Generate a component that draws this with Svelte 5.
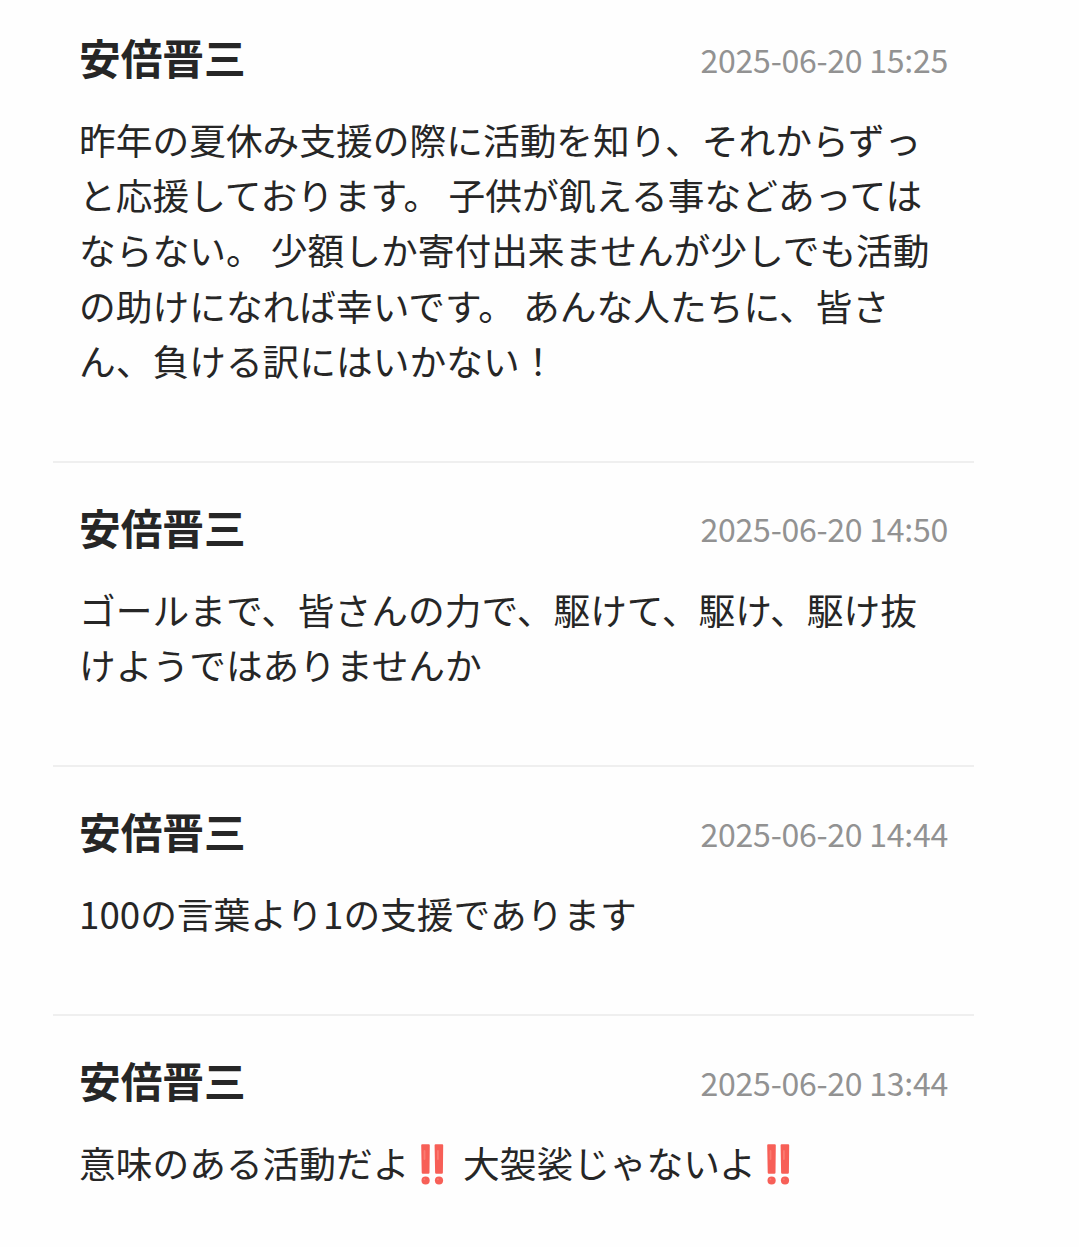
<script>
  const comments = [
    { name: '安倍晋三', time: '2025-06-20 15:25', lines: ['昨年の夏休み支援の際に活動を知り、それからずっ', 'と応援しております。 子供が飢える事などあっては', 'ならない。 少額しか寄付出来ませんが少しでも活動', 'の助けになれば幸いです。 あんな人たちに、皆さ', 'ん、負ける訳にはいかない！'] },
    { name: '安倍晋三', time: '2025-06-20 14:50', lines: ['ゴールまで、皆さんの力で、駆けて、駆け、駆け抜', 'けようではありませんか'] },
    { name: '安倍晋三', time: '2025-06-20 14:44', lines: ['100の言葉より1の支援であります'] },
    { name: '安倍晋三', time: '2025-06-20 13:44', lines: ['意味のある活動だよ‼ 大袈裟じゃないよ‼'] }
  ];
</script>

<main>
  {#each comments as c}
    <article>
      <header>
        <h2>{c.name}</h2>
        <time>{c.time}</time>
      </header>
      <div class="body">
        {#each c.lines as line}
          <p>
            {#each line.split('‼') as part, i}{#if i > 0}<svg class="bangs" viewBox="0 0 23 41" role="img" aria-label="‼">{#each [0, 13.4] as x}<g transform="translate({x} 0)"><path fill="#f75f57" d="M.2 1.2Q.2.2 1.2.2H7.8Q8.8.2 8.8 1.2L8.5 28.6Q8.5 29.8 7.3 29.8H1.9Q.7 29.8.7 28.6Z" /><path stroke="#fb7a70" stroke-width="1.8" stroke-linecap="round" d="M3.5 7V15" /><circle cx="4.6" cy="36.5" r="4.1" fill="#f75f57" /><circle cx="3.4" cy="35.3" r="1" fill="#fb7a70" /></g>{/each}</svg>{/if}{part}{/each}
          </p>
        {/each}
      </div>
    </article>
  {/each}
</main>

<style>
  :global(body) {
    background: #fefefe;
    overflow: hidden;
  }
  main {
    width: 921px;
    height: 1247px;
    margin-left: 53px;
    overflow: hidden;
    font-family: 'Noto Sans CJK JP', sans-serif;
    color: #262626;
  }
  article {
    padding: 33.4px 26px 72.8px;
    border-bottom: 2px solid #efefef;
  }
  article:first-child {
    padding-top: 26.4px;
    padding-bottom: 72.6px;
  }
  article:last-child {
    border-bottom: 0;
  }
  header {
    display: flex;
    justify-content: space-between;
    align-items: center;
    height: 62px;
  }
  h2 {
    margin: 0;
    font-size: 41.7px;
    line-height: 62px;
    font-weight: 700;
  }
  time {
    padding-top: 3px;
    font-size: 32px;
    letter-spacing: -0.25px;
    color: #929292;
  }
  .body {
    margin-top: 23.6px;
    font-size: 36.72px;
  }
  p {
    margin: 0;
    height: 55.2px;
    line-height: 55.2px;
    white-space: nowrap;
  }
  .bangs {
    width: 23px;
    height: 41px;
    vertical-align: -7.5px;
    margin: 0 11px 0 11.3px;
  }
</style>
